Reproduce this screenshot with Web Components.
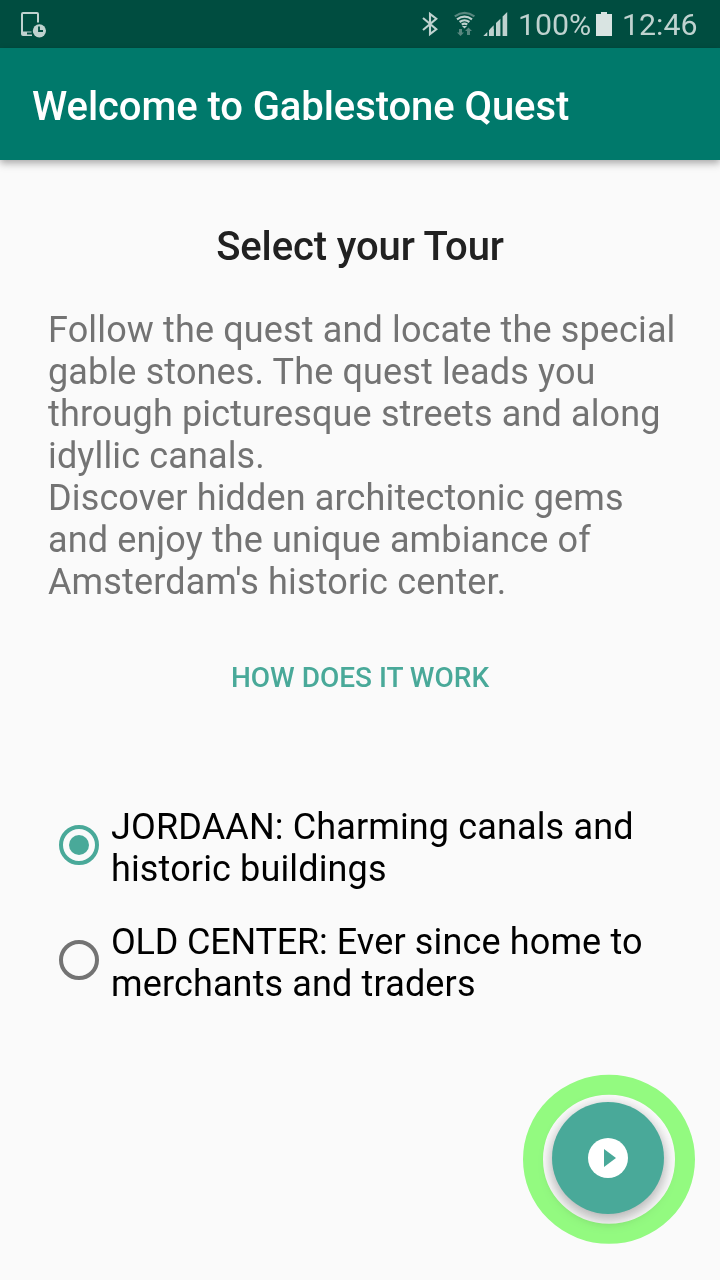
<!DOCTYPE html>
<html lang="en">
<head>
<meta charset="utf-8">
<title>Gablestone Quest</title>
<style>
html,body{margin:0;height:100%;background:#fafafa;font-family:Roboto,sans-serif}
body{overflow:hidden}
</style>
</head>
<body>
<quest-app></quest-app>
<script>
const define = (name, html) => {
  const template = document.createElement('template');
  template.innerHTML = html;
  customElements.define(name, class extends HTMLElement {
    constructor() {
      super();
      this.attachShadow({mode: 'open'}).appendChild(template.content.cloneNode(true));
    }
  });
};

define('status-bar', `
<style>
:host{display:flex;align-items:center;box-sizing:border-box;height:48px;padding:0 23px 0 20px;background:#004d40;color:#bfd2cf;font-size:30.3px;line-height:48px;white-space:nowrap}
svg{display:block;flex:none}
span{padding-top:2px}
.gap{flex:1}
.level{width:77px}
.clock{width:75px}
</style>
<svg width="28" height="48" viewBox="20 0 28 48">
  <path fill="#bfd2cf" fill-rule="evenodd" d="M23 12H37Q39 12 39 14V22.5H37V14H23V31.5H31.5V32.5H27V34.5H32V36H23Q21 36 21 34V14Q21 12 23 12Z"/>
  <circle cx="39.4" cy="30.8" r="6.6" fill="#bfd2cf"/>
  <path d="M39 26.5V31H43" fill="none" stroke="#004d40" stroke-width="1.8"/>
</svg>
<span class="gap"></span>
<svg width="98" height="48" viewBox="420 0 98 48">
  <path d="M423 18L436.3 29.3L430 34.2V13.8L436.3 18.7L423 30" fill="none" stroke="#bfd2cf" stroke-width="2.1"/>
  <path d="M454.8 16.3Q464.6 9.3 474.4 16.3" fill="none" stroke="#58877f" stroke-width="2.2"/>
  <g fill="none" stroke="#bfd2cf" stroke-width="2.2">
    <path d="M457 19.3Q464.5 13.9 472 19.3"/>
    <path d="M459.6 22Q464.5 18.5 469.4 22"/>
    <path d="M461.8 24.6Q464.5 22.5 467.2 24.6"/>
  </g>
  <path d="M462 26H467L464.5 28.5Z" fill="#bfd2cf"/>
  <path d="M459 29H462V32.5H464L460.5 36L457 32.5H459ZM467 35H470V31H472L468.5 27.4L465 31H467Z" fill="#58877f"/>
  <path d="M483.3 36L487.3 32V36ZM489 30.2L490.2 29H493.7V36H489ZM496 23L500.4 18.7V36H496ZM502.6 16.5L507.2 12V36H502.6Z" fill="#bfd2cf"/>
  <path d="M490 29L493.7 25.3V36H490Z" fill="#bfd2cf"/>
</svg>
<span class="level">100%</span>
<svg width="27" height="48" viewBox="595 0 27 48"><path fill="#d9e4e2" d="M596 14H601V12H607V14H612V36H596Z"/></svg>
<span class="clock">12:46</span>
`);

define('app-bar', `
<style>
:host{display:flex;align-items:center;box-sizing:border-box;height:112px;padding:6px 32px 0;background:#00796b;color:#fff;font-size:40px;font-weight:500;line-height:48px;letter-spacing:-.08px;white-space:nowrap;box-shadow:0 3px 7px rgba(0,0,0,.29),0 6px 10px rgba(0,0,0,.05)}
</style>
<slot></slot>
`);

define('text-button', `
<style>
:host{display:block;color:#49a999;font-size:28px;font-weight:500;line-height:33px;text-align:center;text-transform:uppercase}
button{all:unset}
</style>
<button><slot></slot></button>
`);

define('radio-option', `
<style>
:host{display:flex;gap:12px;color:#000;font-size:36px;line-height:42px;letter-spacing:.14px;white-space:nowrap}
.ring{box-sizing:border-box;flex:none;width:40px;height:40px;margin-top:19px;border:4px solid #737373;border-radius:50%;display:grid;place-items:center}
:host([checked]) .ring{border-color:#49a999}
:host([checked]) .ring::after{content:"";width:20px;height:20px;border-radius:50%;background:#49a999}
</style>
<span class="ring"></span><span><slot></slot></span>
`);

define('start-button', `
<style>
:host{display:block;width:172px;height:170px}
svg{display:block;overflow:visible}
.disc{filter:drop-shadow(0 6px 7px rgba(0,0,0,.22)) drop-shadow(0 1px 6px rgba(0,0,0,.12))}
.ring{mix-blend-mode:multiply}
</style>
<svg width="172" height="170" viewBox="523 1074 172 170">
  <circle class="disc" cx="608" cy="1158" r="56" fill="#49a999"/>
  <ellipse cx="609" cy="1159.3" rx="76" ry="74.5" fill="none" stroke="#96ff83" stroke-width="20" class="ring"/>
  <circle cx="608" cy="1158" r="20" fill="#fff"/>
  <path d="M604 1149L616 1158L604 1167Z" fill="#49a999"/>
</svg>
`);

define('quest-app', `
<style>
:host{display:flex;flex-direction:column;width:720px;height:1280px;background:#fafafa}
main{display:flex;flex-direction:column;flex:1;padding:63px 25px 36px 48px}
h1{margin:0 -25px 0 -48px;color:#212121;font-size:40px;font-weight:500;line-height:47px;letter-spacing:-.12px;text-align:center;white-space:nowrap}
p{margin:39px 0 0;color:#737373;font-size:36px;line-height:42px;letter-spacing:.14px;white-space:nowrap}
text-button{margin:58px -25px 0 -48px}
.tours{display:flex;flex-direction:column;gap:31px;margin-top:112px;padding-left:11px}
.caps{letter-spacing:-.18px}
start-button{align-self:flex-end;margin-top:auto}
</style>
<status-bar></status-bar>
<app-bar>Welcome to Gablestone Quest</app-bar>
<main>
  <h1>Select your Tour</h1>
  <p>Follow the quest and locate the special<br>gable stones. The quest leads you<br>through picturesque streets and along<br>idyllic canals.<br>Discover hidden architectonic gems<br>and enjoy the unique ambiance of<br>Amsterdam's historic center.</p>
  <text-button>How does it work</text-button>
  <div class="tours">
    <radio-option checked>JORDAAN: Charming canals and<br>historic buildings</radio-option>
    <radio-option><span class="caps">OLD CENTER:</span> Ever since home to<br>merchants and traders</radio-option>
  </div>
  <start-button></start-button>
</main>
`);
</script>
</body>
</html>
